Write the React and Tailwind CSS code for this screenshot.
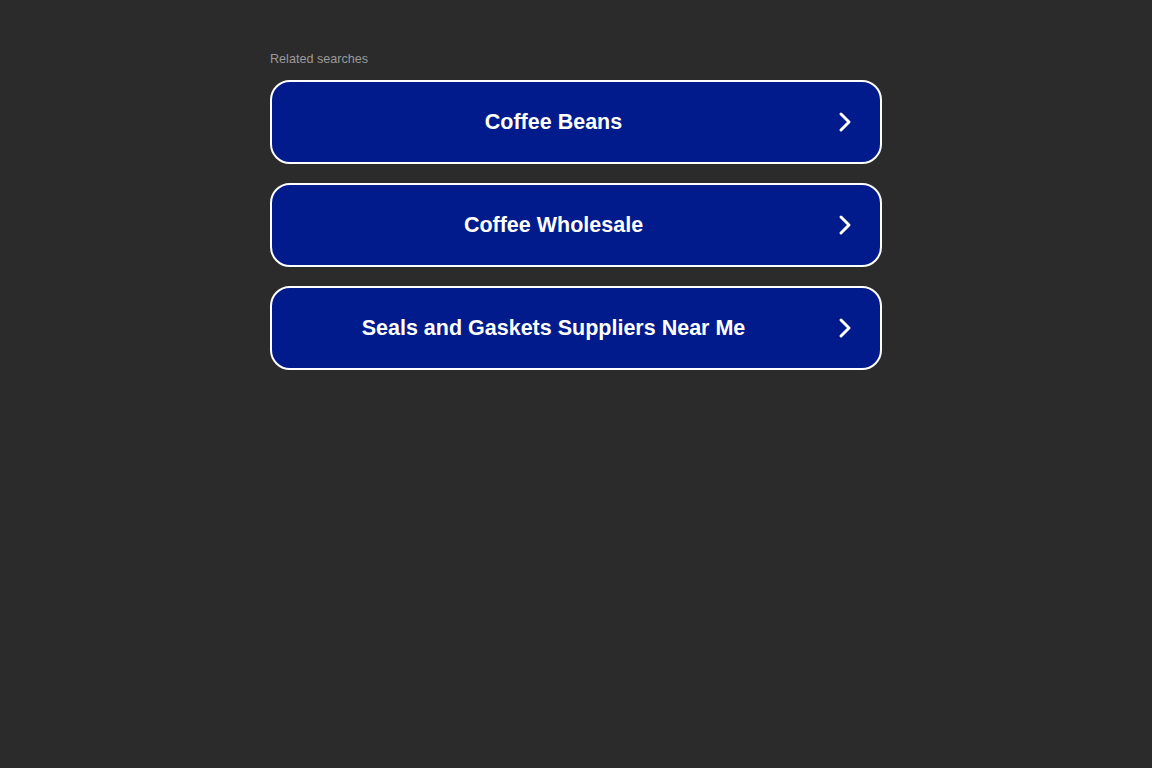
const items = ['Coffee Beans', 'Coffee Wholesale', 'Seals and Gaskets Suppliers Near Me']

const Chevron = () => (
    <svg width="14" height="22" viewBox="0 0 14 22" fill="none" stroke="white" strokeWidth="3" strokeLinecap="round" strokeLinejoin="round">
        <path d="M3 3l8 8-8 8" />
    </svg>
)

export default function App() {
    return (
        <div className="min-h-screen bg-[#2b2b2b] font-['Liberation_Sans',Arial,sans-serif]">
            <div className="w-[612px] ml-[270px] pt-[51px]">
                <p className="text-[12.6px] text-[#9a9a9a] leading-[16px] mb-[13px]">Related searches</p>
                <div className="flex flex-col gap-[19px]">
                    {items.map((item) => (
                        <a
                            key={item}
                            href="#"
                            className="h-[84px] flex items-center border-2 border-white rounded-[20px] bg-[#011a8c] pl-[20px] pr-[28px]"
                        >
                            <span className="flex-1 text-center text-white font-bold text-[21.5px] mr-[23px]">{item}</span>
                            <Chevron />
                        </a>
                    ))}
                </div>
            </div>
        </div>
    )
}
